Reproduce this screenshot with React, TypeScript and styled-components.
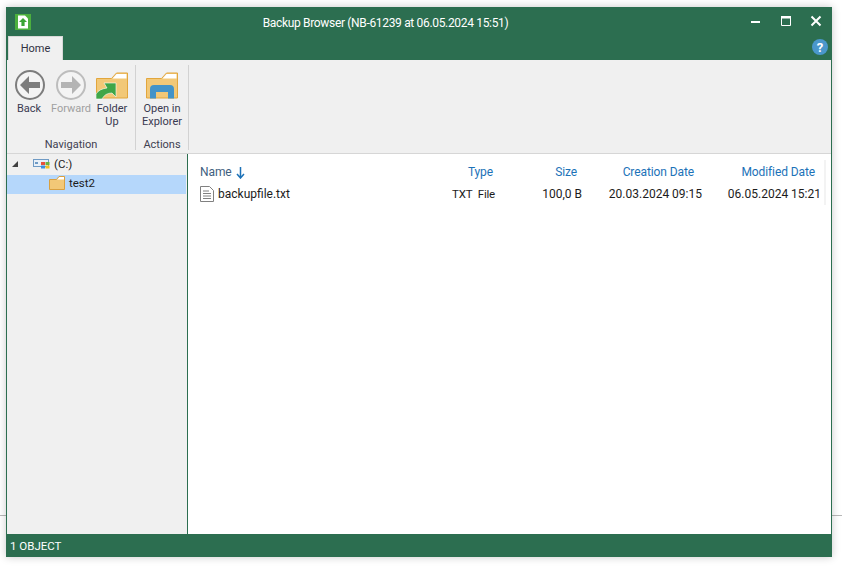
import React from "react";
import styled, { createGlobalStyle } from "styled-components";

const GREEN = "#2c6e50";
const LINK = "#1c72b8";

const Global = createGlobalStyle`
  html, body {
    margin: 0;
    padding: 0;
    background: #ffffff;
    font-family: "Roboto", "Open Sans", sans-serif;
    font-size: 12px;
    color: #1f1f1f;
  }
`;

const Page = styled.div`
  position: relative;
  width: 842px;
  height: 568px;
  padding: 7px 10px 11px 6px;
  box-sizing: border-box;
  overflow: hidden;
`;

const BackLine = styled.div`
  position: absolute;
  left: 0;
  right: 0;
  top: 515px;
  height: 1px;
  background: #b8b8b8;
`;

const Window = styled.div`
  position: relative;
  height: 100%;
  display: flex;
  flex-direction: column;
  background: ${GREEN};
  box-shadow: 0 0 8px rgba(0, 0, 0, 0.22);
`;

const TitleBar = styled.div`
  height: 29px;
  flex: none;
  display: flex;
  align-items: center;
  padding: 0 7px 0 9px;
  color: #ffffff;
`;

const AppIcon = styled.svg`
  width: 16px;
  height: 16px;
  flex: none;
`;

const Title = styled.div`
  flex: 1;
  text-align: center;
  font-size: 12px;
  letter-spacing: -0.33px;
  margin-top: 3px;
  padding-right: 7px;
`;

const WinButtons = styled.div`
  display: flex;
  align-items: center;
  gap: 12px;
  margin-top: -2px;
`;

const WinGlyph = styled.svg`
  width: 18px;
  height: 14px;
  display: block;
`;

const TabRow = styled.div`
  height: 24px;
  flex: none;
  display: flex;
  align-items: flex-end;
  justify-content: space-between;
  padding: 0 4px 0 2px;
`;

const Tab = styled.div`
  width: 55px;
  height: 24px;
  background: #f0f0f0;
  border: 1px solid #d8d8d8;
  border-bottom: none;
  box-sizing: border-box;
  display: flex;
  align-items: center;
  justify-content: center;
  font-size: 11px;
  color: #303040;
`;

const HelpBadge = styled.div`
  width: 16px;
  height: 16px;
  border-radius: 50%;
  background: #4a97cb;
  color: #ffffff;
  font-weight: 700;
  font-size: 13px;
  display: flex;
  align-items: center;
  justify-content: center;
  margin-bottom: 5px;
`;

const Ribbon = styled.div`
  height: 94px;
  flex: none;
  box-sizing: border-box;
  display: flex;
  background: #f0f0f0;
  border-bottom: 1px solid #d6d6d6;
  margin: 0 1px;
  padding-top: 5px;
`;

const Group = styled.div<{ $width: number }>`
  width: ${(p) => p.$width}px;
  height: 85px;
  box-sizing: border-box;
  display: flex;
  flex-direction: column;
  border-right: 1px solid #d2d2d2;
`;

const GroupItems = styled.div`
  flex: 1;
  display: flex;
  padding-left: 5px;
`;

const GroupLabel = styled.div`
  text-align: center;
  color: #404050;
  font-size: 11px;
  height: 14px;
  line-height: 17px;
`;

const RibbonButton = styled.div<{ $width: number; $disabled?: boolean }>`
  width: ${(p) => p.$width}px;
  flex: none;
  display: flex;
  flex-direction: column;
  align-items: center;
  color: ${(p) => (p.$disabled ? "#a0a0a0" : "#3a3a50")};
  font-size: 11px;
  line-height: 13px;
  text-align: center;
  padding-top: 4px;
  svg {
    width: 32px;
    height: 32px;
    margin-bottom: 1px;
    flex: none;
  }
`;

const BackCaption = styled.span`
  margin-left: -2px;
`;

const Body = styled.div`
  flex: 1;
  min-height: 0;
  display: flex;
  margin: 0 1px;
`;

const Tree = styled.div`
  width: 180px;
  flex: none;
  background: #f0f0f0;
  padding-top: 2px;
`;

const TreeRow = styled.div<{ $level: number; $gap: number; $selected?: boolean }>`
  height: 19px;
  box-sizing: border-box;
  display: flex;
  align-items: center;
  gap: ${(p) => p.$gap}px;
  padding-left: ${(p) => p.$level}px;
  padding-bottom: 3px;
  background: ${(p) => (p.$selected ? "#b5d7fb" : "transparent")};
  color: #1c1c1c;
  font-size: 11.5px;
  margin-right: 1px;
`;

const Expander = styled.svg`
  width: 8px;
  height: 8px;
  margin-right: 11px;
  flex: none;
`;

const DriveIcon = styled.svg`
  width: 18px;
  height: 16px;
  flex: none;
`;

const FolderIcon = styled.svg`
  width: 16px;
  height: 16px;
  flex: none;
`;

const Divider = styled.div`
  width: 1px;
  flex: none;
  background: ${GREEN};
`;

const ListPane = styled.div`
  position: relative;
  flex: 1;
  min-width: 0;
  background: #ffffff;
  padding-top: 7px;
`;

const ScrollHint = styled.div`
  position: absolute;
  top: 6px;
  right: 5px;
  width: 2px;
  height: 45px;
  background: #f3f3f3;
`;

const ListGrid = styled.div`
  position: relative;
  display: grid;
  grid-template-columns: 12px 240px 55px 87px 120px 119px;
  grid-auto-rows: 22px;
  align-items: center;
`;

const HeadCell = styled.div<{ $inset?: number }>`
  color: ${LINK};
  font-size: 12px;
  letter-spacing: -0.1px;
  text-align: right;
  padding-right: ${(p) => p.$inset ?? 0}px;
  white-space: nowrap;
`;

const NameHead = styled(HeadCell)`
  color: #3f5f80;
  display: flex;
  align-items: center;
  gap: 4px;
`;

const Cell = styled.div`
  color: #1c1c1c;
  font-size: 12px;
  text-align: right;
  white-space: nowrap;
`;

const TypeCell = styled(Cell)`
  font-size: 11.5px;
  letter-spacing: -0.2px;
`;

const FileCell = styled(Cell)`
  display: flex;
  align-items: center;
  gap: 4px;
  text-align: left;
`;

const Spacer = styled.div``;

const StatusBar = styled.div`
  height: 23px;
  flex: none;
  display: flex;
  align-items: center;
  padding-left: 4px;
  color: #ffffff;
  font-size: 11.5px;
`;

const FolderShape = () => (
  <>
    <path d="M.5 9.500h15l5-5.500h11v25H.5z" fill="#f2c877" stroke="#e2a63c" />
    <path d="M16.500 9.500l4-4.500h10v4.500z" fill="#ffffff" />
  </>
);

export default function App() {
  return (
    <Page>
      <Global />
      <BackLine />
      <Window>
        <TitleBar>
          <AppIcon viewBox="0 0 16 16">
            <rect width="16" height="16" fill="#4caf3e" />
            <path d="M3 1.500h7l3 3v10H3z" fill="#ffffff" />
            <path d="M8 4l4 4H9.600v4H6.400V8H4z" fill="#3aa435" />
          </AppIcon>
          <Title>Backup Browser (NB-61239 at 06.05.2024 15:51)</Title>
          <WinButtons>
            <WinGlyph viewBox="0 0 18 14">
              <rect x="4" y="7" width="9" height="2" fill="#fff" />
            </WinGlyph>
            <WinGlyph viewBox="0 0 18 14">
              <path d="M4.500 2.500h9v9h-9z" fill="none" stroke="#fff" />
              <rect x="4" y="2" width="10" height="2.500" fill="#fff" />
            </WinGlyph>
            <WinGlyph viewBox="0 0 18 14">
              <path d="M4.500 2.500l9 9M13.500 2.500l-9 9" stroke="#fff" strokeWidth="2" />
            </WinGlyph>
          </WinButtons>
        </TitleBar>
        <TabRow>
          <Tab>Home</Tab>
          <HelpBadge>?</HelpBadge>
        </TabRow>
        <Ribbon>
          <Group $width={129}>
            <GroupItems>
              <RibbonButton $width={36}>
                <svg viewBox="0 0 32 32">
                  <circle cx="16" cy="16" r="14" fill="#f4f4f4" stroke="#7d7d7d" strokeWidth="2" />
                  <path d="M15 7l-9 9 9 9v-6h11v-6H15z" fill="#7d7d7d" />
                </svg>
                <BackCaption>Back</BackCaption>
              </RibbonButton>
              <RibbonButton $width={46} $disabled>
                <svg viewBox="0 0 32 32">
                  <circle cx="16" cy="16" r="14" fill="#f4f4f4" stroke="#bdbdbd" strokeWidth="2" />
                  <path d="M17 7l9 9-9 9v-6H6v-6h11z" fill="#b4b4b4" />
                </svg>
                Forward
              </RibbonButton>
              <RibbonButton $width={36}>
                <svg viewBox="0 0 32 32">
                  <FolderShape />
                  <path
                    d="M0 30v-5q3-5 11-6l-3-5h12v14l-4-4q-7 0-10 6z"
                    fill="#3fa648"
                    stroke="#ffffff"
                    strokeWidth="0.600"
                  />
                </svg>
                <span>
                  Folder
                  <br />
                  Up
                </span>
              </RibbonButton>
            </GroupItems>
            <GroupLabel>Navigation</GroupLabel>
          </Group>
          <Group $width={53}>
            <GroupItems>
              <RibbonButton $width={42}>
                <svg viewBox="0 0 32 32">
                  <FolderShape />
                  <path d="M4 29.500V20q0-4 4-4h16q4 0 4 4v9.500h-6V23H10v6.500z" fill="#4393c8" />
                </svg>
                <span>
                  Open in
                  <br />
                  Explorer
                </span>
              </RibbonButton>
            </GroupItems>
            <GroupLabel>Actions</GroupLabel>
          </Group>
        </Ribbon>
        <Body>
          <Tree>
            <TreeRow $level={4} $gap={3}>
              <Expander viewBox="0 0 8 8">
                <path d="M7 1v6H1z" fill="#404040" />
              </Expander>
              <DriveIcon viewBox="0 0 18 16">
                <rect x="0.500" y="3.500" width="15" height="7" fill="#e8f0f8" stroke="#6f9ac4" />
                <rect x="2" y="6" width="3" height="2" fill="#6f9ac4" />
                <rect x="8" y="6" width="4" height="3" fill="#e8503a" />
                <rect x="12.500" y="6" width="4" height="3" fill="#6cb33f" />
                <rect x="8" y="9.500" width="4" height="3" fill="#3a8ee0" />
                <rect x="12.500" y="9.500" width="4" height="3" fill="#f4c020" />
              </DriveIcon>
              (C:)
            </TreeRow>
            <TreeRow $level={42} $gap={4} $selected>
              <FolderIcon viewBox="0 0 16 16">
                <path d="M.5 4.500h7l2.500-3h5.500v13H.5z" fill="#f2c877" stroke="#d9a040" />
                <path d="M8 4.500l2.500-2.500h4.500v2.500z" fill="#ffffff" />
              </FolderIcon>
              test2
            </TreeRow>
          </Tree>
          <Divider />
          <ListPane>
            <ScrollHint />
            <ListGrid>
              <Spacer />
              <NameHead>
                Name
                <svg width="9" height="13" viewBox="0 0 9 13">
                  <path d="M4.500 1v10M1 8l3.500 4L8 8" fill="none" stroke={LINK} strokeWidth="1.500" />
                </svg>
              </NameHead>
              <HeadCell $inset={2}>Type</HeadCell>
              <HeadCell $inset={5}>Size</HeadCell>
              <HeadCell $inset={8}>Creation Date</HeadCell>
              <HeadCell $inset={6}>Modified Date</HeadCell>

              <Spacer />
              <FileCell>
                <svg width="14" height="16" viewBox="0 0 14 16">
                  <path d="M.5.500h9l4 4v11H.5z" fill="#fff" stroke="#808080" />
                  <path d="M3 5h6M3 7.500h8M3 10h8M3 12.500h8" stroke="#808080" />
                </svg>
                backupfile.txt
              </FileCell>
              <TypeCell>TXT&nbsp; File</TypeCell>
              <Cell>100,0 B</Cell>
              <Cell>20.03.2024 09:15</Cell>
              <Cell>06.05.2024 15:21</Cell>
            </ListGrid>
          </ListPane>
        </Body>
        <StatusBar>1 OBJECT</StatusBar>
      </Window>
    </Page>
  );
}
